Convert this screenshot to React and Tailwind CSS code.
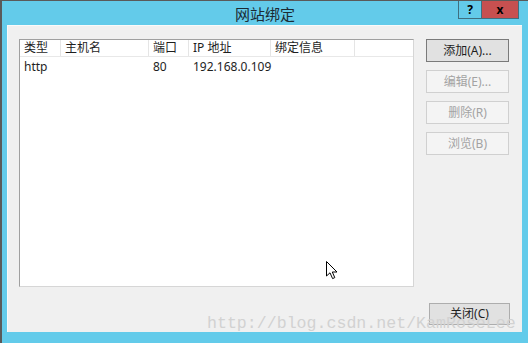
import React from "react";

const listCols = [
  { label: "类型", w: "w-[41px]" },
  { label: "主机名", w: "w-[88px]" },
  { label: "端口", w: "w-[40px]" },
  { label: "IP 地址", w: "w-[82px]" },
  { label: "绑定信息", w: "w-[84px]" },
];

const sideButtons = [
  { label: "添加(A)...", enabled: true },
  { label: "编辑(E)...", enabled: false },
  { label: "删除(R)", enabled: false },
  { label: "浏览(B)", enabled: false },
];

function Cursor() {
  return (
    <svg className="absolute left-[323px] top-[259px]" width="14" height="21" viewBox="0 0 14 21">
      <path
        d="M1.5 1.5 L1.5 16 L5 12.8 L7.6 18.6 L9.8 17.6 L7.3 12 L12 12 Z"
        fill="#ffffff"
        stroke="#000000"
        strokeWidth="1"
        strokeLinejoin="miter"
      />
    </svg>
  );
}

export default function App() {
  return (
    <div
      className="relative w-[528px] h-[343px] overflow-hidden bg-[#63cbea] border-l-2 border-t border-[#5a5a5a] flex flex-col text-[12px] text-[#1e1e1e]"
      style={{ fontFamily: '"Noto Sans", "Noto Sans CJK SC", sans-serif' }}
    >
      {/* title bar */}
      <div className="relative h-[24px] flex items-center justify-center">
        <span className="text-[15px] text-[#1b2a33] mt-[2px]" style={{ fontFamily: '"Noto Sans CJK SC", sans-serif' }}>
          网站绑定
        </span>
        <div className="absolute right-[9px] top-[-1px] flex">
          <div className="w-[24px] h-[19px] border border-[#3f6f80] bg-[#63cbea] flex items-center justify-center font-bold text-[12px] text-black">
            ?
          </div>
          <div className="w-[37px] h-[19px] border border-[#3f6f80] border-l-0 bg-[#c75050] flex items-center justify-center font-bold text-[12px] text-black">
            x
          </div>
        </div>
      </div>

      {/* content */}
      <div className="ml-[5px] mr-[6px] h-[307px] bg-[#f0f0f0] border-l border-t border-[#fafafa] pt-[13px] pl-[11px] flex flex-col">
        <div className="flex gap-[12px]">
          {/* list view */}
          <div className="w-[395px] h-[248px] bg-white border border-[#a0a0a0] border-r-[#d6d6d6] border-b-[#d6d6d6]">
            <div className="flex h-[17px] border-b border-[#e8e8e8]">
              {listCols.map((c) => (
                <div key={c.label} className={`${c.w} h-full border-r border-[#e5e5e5] pl-[4px] flex items-center`}>
                  {c.label}
                </div>
              ))}
            </div>
            <div className="flex h-[20px] items-center">
              <div className="w-[41px] pl-[4px]">http</div>
              <div className="w-[88px]"></div>
              <div className="w-[40px] pl-[4px]">80</div>
              <div className="w-[82px] pl-[4px]">192.168.0.109</div>
            </div>
          </div>

          {/* side buttons */}
          <div className="flex flex-col gap-[8px]">
            {sideButtons.map((b) =>
              b.enabled ? (
                <div
                  key={b.label}
                  className="w-[83px] h-[23px] bg-[#e1e1e1] border border-[#7a7a7a] flex items-center justify-center"
                >
                  {b.label}
                </div>
              ) : (
                <div
                  key={b.label}
                  className="w-[83px] h-[23px] bg-[#f4f4f4] border border-[#d0d0d0] flex items-center justify-center text-[#a3a3a3]"
                >
                  {b.label}
                </div>
              )
            )}
          </div>
        </div>

        <div className="flex justify-end pr-[12px] mt-[16px]">
          <div className="w-[81px] h-[22px] bg-[#e1e1e1] border border-[#adadad] flex items-center justify-center">
            关闭(C)
          </div>
        </div>
      </div>

      <Cursor />

      {/* watermark */}
      <div
        className="absolute left-[205px] top-[311px] text-[16.6px] text-[#d2d2d2] whitespace-nowrap pointer-events-none"
        style={{ fontFamily: '"Liberation Mono", monospace' }}
      >
        http://blog.csdn.net/KamRoseLee
      </div>
    </div>
  );
}
